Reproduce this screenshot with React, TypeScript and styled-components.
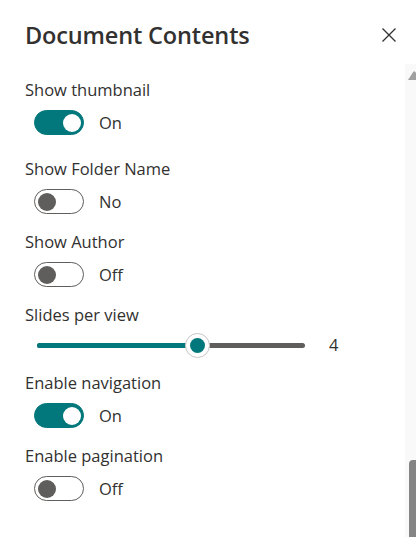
import React from "react";
import styled, { createGlobalStyle } from "styled-components";

const GlobalStyle = createGlobalStyle`
  html, body { margin: 0; padding: 0; background: #ffffff; }
  body { font-family: "Open Sans", "Liberation Sans", sans-serif; color: #323130; }
  * { box-sizing: border-box; }
`;

const TEAL = "#03787c";

const Panel = styled.div`
  width: 416px;
  height: 537px;
  display: flex;
  flex-direction: column;
  overflow: hidden;
`;

const Header = styled.header`
  height: 64px;
  flex: none;
  display: flex;
  align-items: flex-start;
  justify-content: space-between;
  padding: 18px 20px 0 25px;
`;

const Title = styled.h1`
  margin: 0;
  font-size: 23.5px;
  line-height: 34px;
  font-weight: 600;
  color: #323130;
  letter-spacing: -0.15px;
`;

const CloseButton = styled.button`
  border: none;
  background: transparent;
  padding: 0;
  margin-top: 10px;
  width: 14px;
  height: 14px;
  display: flex;
  cursor: pointer;
`;

const Body = styled.div`
  flex: 1;
  display: flex;
  min-height: 0;
`;

const Content = styled.div`
  flex: 1;
  padding: 14px 0 0 25px;
  display: flex;
  flex-direction: column;
`;

const Field = styled.div<{ $extra?: number }>`
  display: flex;
  flex-direction: column;
  margin-bottom: ${(p) => 16 + (p.$extra ?? 0)}px;
`;

const Label = styled.div`
  font-size: 16.5px;
  line-height: 24px;
  color: #323130;
`;

const ToggleRow = styled.div`
  margin-top: 8px;
  height: 25px;
  display: flex;
  align-items: center;
  gap: 15px;
  padding-left: 9px;
`;

const Track = styled.span<{ $on: boolean }>`
  position: relative;
  width: 50px;
  height: 25px;
  border-radius: 13px;
  border: 1.25px solid ${(p) => (p.$on ? TEAL : "#605e5c")};
  background: ${(p) => (p.$on ? TEAL : "#ffffff")};
  display: flex;
  align-items: center;
  justify-content: ${(p) => (p.$on ? "flex-end" : "flex-start")};
  padding: 0 2.5px;
  flex: none;
`;

const Knob = styled.span<{ $on: boolean }>`
  width: 18px;
  height: 18px;
  border-radius: 50%;
  background: ${(p) => (p.$on ? "#ffffff" : "#605e5c")};
`;

const StateText = styled.span`
  font-size: 16.5px;
  line-height: 24px;
  color: #323130;
`;

const SliderRow = styled.div`
  margin-top: 6px;
  height: 24px;
  display: flex;
  align-items: center;
  padding-left: 12px;
`;

const SliderTrack = styled.div`
  position: relative;
  width: 268px;
  height: 5px;
  border-radius: 3px;
  background: #605e5c;
  flex: none;
`;

const SliderFill = styled.div`
  height: 100%;
  border-radius: 3px;
  background: ${TEAL};
`;

const SliderThumb = styled.span`
  position: absolute;
  top: 50%;
  width: 25px;
  height: 25px;
  margin: -12.5px 0 0 -12.5px;
  border-radius: 50%;
  background: #ffffff;
  border: 1px solid #c8c6c4;
  display: flex;
  align-items: center;
  justify-content: center;
  &::after {
    content: "";
    width: 15px;
    height: 15px;
    border-radius: 50%;
    background: ${TEAL};
  }
`;

const SliderValue = styled.span`
  margin-left: 24px;
  font-size: 16.5px;
  line-height: 24px;
  color: #323130;
`;

const ScrollBar = styled.div`
  width: 11px;
  flex: none;
  background: #f9f9f9;
  display: flex;
  flex-direction: column;
  justify-content: space-between;
  overflow: hidden;
`;

const ScrollThumb = styled.div`
  margin-left: 4px;
  width: 7px;
  height: 77px;
  background: #858585;
  border-top-left-radius: 4px;
`;

function Toggle({ on, text }: { on: boolean; text: string }) {
  return (
    <ToggleRow>
      <Track $on={on}>
        <Knob $on={on} />
      </Track>
      <StateText>{text}</StateText>
    </ToggleRow>
  );
}

function Slider({ value, min, max }: { value: number; min: number; max: number }) {
  const pct = ((value - min) / (max - min)) * 100;
  return (
    <SliderRow>
      <SliderTrack>
        <SliderFill style={{ width: `${pct}%` }} />
        <SliderThumb style={{ left: `${pct}%` }} />
      </SliderTrack>
      <SliderValue>{value}</SliderValue>
    </SliderRow>
  );
}

export default function App() {
  return (
    <>
      <GlobalStyle />
      <Panel>
        <Header>
          <Title>Document Contents</Title>
          <CloseButton aria-label="Close">
            <svg width="14" height="14" viewBox="0 0 14 14">
              <path d="M0.5 0.5 L13.5 13.5 M13.5 0.5 L0.5 13.5" stroke="#323130" strokeWidth="1.3" fill="none" />
            </svg>
          </CloseButton>
        </Header>
        <Body>
          <Content>
            <Field $extra={6}>
              <Label>Show thumbnail</Label>
              <Toggle on text="On" />
            </Field>
            <Field>
              <Label>Show Folder Name</Label>
              <Toggle on={false} text="No" />
            </Field>
            <Field>
              <Label>Show Author</Label>
              <Toggle on={false} text="Off" />
            </Field>
            <Field $extra={-2}>
              <Label>Slides per view</Label>
              <Slider value={4} min={1} max={6} />
            </Field>
            <Field>
              <Label>Enable navigation</Label>
              <Toggle on text="On" />
            </Field>
            <Field>
              <Label>Enable pagination</Label>
              <Toggle on={false} text="Off" />
            </Field>
          </Content>
          <ScrollBar>
            <svg width="11" height="18" viewBox="0 0 11 18">
              <polygon points="3,16 8.5,7.5 10,7.5 11,9 11,16" fill="#a0a0a0" />
            </svg>
            <ScrollThumb />
          </ScrollBar>
        </Body>
      </Panel>
    </>
  );
}
